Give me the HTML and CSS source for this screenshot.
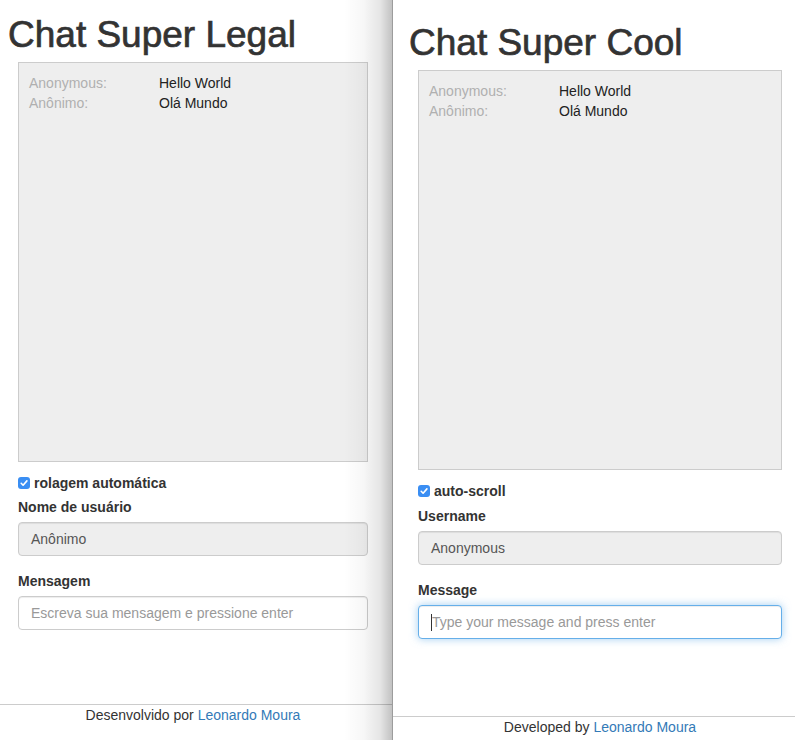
FILE: index.html
```html
<!DOCTYPE html>
<html lang="pt">
<head>
<meta charset="utf-8">
<title>Chat Super</title>
<link rel="stylesheet" href="styles.css">
</head>
<body>
<div class="desk">
  <section class="win win-left">
    <h1 class="title">Chat Super Legal</h1>
    <div class="content">
      <div class="chat">
        <div class="msg"><span class="who">Anonymous:</span><span class="text">Hello World</span></div>
        <div class="msg"><span class="who">Anônimo:</span><span class="text">Olá Mundo</span></div>
      </div>
      <div class="check-row"><span class="check"><svg viewBox="0 0 12 12" width="12" height="12"><path d="M3.2 6.3 L5.1 8.2 L8.9 3.9" fill="none" stroke="#fff" stroke-width="1.6" stroke-linecap="round" stroke-linejoin="round"/></svg></span><span class="check-label">rolagem automática</span></div>
      <div class="group">
        <div class="label">Nome de usuário</div>
        <div class="control filled">Anônimo</div>
      </div>
      <div class="group">
        <div class="label">Mensagem</div>
        <div class="control"><span class="ph">Escreva sua mensagem e pressione enter</span></div>
      </div>
    </div>
    <footer class="foot">Desenvolvido por <a href="#">Leonardo Moura</a></footer>
  </section>
  <section class="win win-right">
    <h1 class="title">Chat Super Cool</h1>
    <div class="content">
      <div class="chat">
        <div class="msg"><span class="who">Anonymous:</span><span class="text">Hello World</span></div>
        <div class="msg"><span class="who">Anônimo:</span><span class="text">Olá Mundo</span></div>
      </div>
      <div class="check-row"><span class="check"><svg viewBox="0 0 12 12" width="12" height="12"><path d="M3.2 6.3 L5.1 8.2 L8.9 3.9" fill="none" stroke="#fff" stroke-width="1.6" stroke-linecap="round" stroke-linejoin="round"/></svg></span><span class="check-label">auto-scroll</span></div>
      <div class="group">
        <div class="label">Username</div>
        <div class="control filled">Anonymous</div>
      </div>
      <div class="group">
        <div class="label">Message</div>
        <div class="control focus"><span class="caret"></span><span class="ph">Type your message and press enter</span></div>
      </div>
    </div>
    <footer class="foot">Developed by <a href="#">Leonardo Moura</a></footer>
  </section>
</div>
</body>
</html>
```

FILE: styles.css
```css
html, body {
  margin: 0;
  padding: 0;
  background: #fff;
  overflow: hidden;
}
body {
  width: 795px;
  height: 740px;
  font-family: "Liberation Sans", Arial, Helvetica, sans-serif;
  font-size: 14px;
  line-height: 20px;
  color: #333;
}
.desk {
  display: flex;
  align-items: flex-start;
  width: 795px;
  height: 740px;
  overflow: hidden;
}
.win {
  display: flex;
  flex-direction: column;
  flex: none;
  background: #fff;
  box-sizing: border-box;
}
.win-left {
  position: relative;
  width: 392px;
  height: 740px;
}
.win-left::after {
  content: "";
  position: absolute;
  top: 0;
  right: 0;
  width: 48px;
  height: 100%;
  background: linear-gradient(to right, rgba(0,0,0,0) 0%, rgba(0,0,0,0.03) 40%, rgba(0,0,0,0.1) 75%, rgba(0,0,0,0.24) 100%);
  pointer-events: none;
}
.win-right {
  width: 415px;
  height: 752px;
  border-left: 1px solid #9c9c9c;
}
.title {
  font-size: 37px;
  line-height: 40px;
  font-weight: normal;
  color: #333;
  margin: 0;
  -webkit-text-stroke: 0.7px #333;
  white-space: nowrap;
}
.win-left .title { margin: 15px 0 7px 8px; }
.win-right .title { margin: 23px 0 7px 16px; }
.win-left .content { margin: 0 24px 0 18px; }
.win-right .content { margin: 0 25px 0 25px; }
.chat {
  height: 400px;
  box-sizing: border-box;
  border: 1px solid #ccc;
  background: #eee;
  padding: 10px;
}
.msg {
  display: flex;
  white-space: nowrap;
}
.who {
  width: 130px;
  flex: none;
  color: #b0b0b0;
}
.text { color: #222; }
.check-row {
  display: flex;
  align-items: center;
  gap: 4px;
  margin-top: 11px;
  margin-bottom: 4px;
  height: 20px;
}
.win-right .check-row { margin-bottom: 5px; }
.check {
  width: 12px;
  height: 12px;
  border-radius: 3px;
  background: #3a8ef3;
  display: flex;
  flex: none;
}
.check-label, .label {
  font-weight: bold;
  color: #333;
  white-space: nowrap;
}
.label { margin-bottom: 5px; }
.group { margin-bottom: 15px; }
.control {
  height: 34px;
  box-sizing: border-box;
  border: 1px solid #ccc;
  border-radius: 4px;
  padding: 6px 12px;
  color: #555;
  background: #fff;
  white-space: nowrap;
  display: flex;
  align-items: center;
  box-shadow: inset 0 1px 1px rgba(0,0,0,0.075);
}
.control.filled { background: #eee; }
.ph { color: #999; }
.control.focus {
  border-color: #66afe9;
  box-shadow: inset 0 1px 1px rgba(0,0,0,0.075), 0 0 8px rgba(102,175,233,0.6);
}
.caret {
  width: 1px;
  height: 17px;
  background: #333;
  flex: none;
}
.foot {
  margin-top: auto;
  height: 36px;
  box-sizing: border-box;
  border-top: 1px solid #ccc;
  text-align: center;
  white-space: nowrap;
  color: #333;
}
.win-left .foot { padding-right: 6px; }
.foot a {
  color: #337ab7;
  text-decoration: none;
}
```
